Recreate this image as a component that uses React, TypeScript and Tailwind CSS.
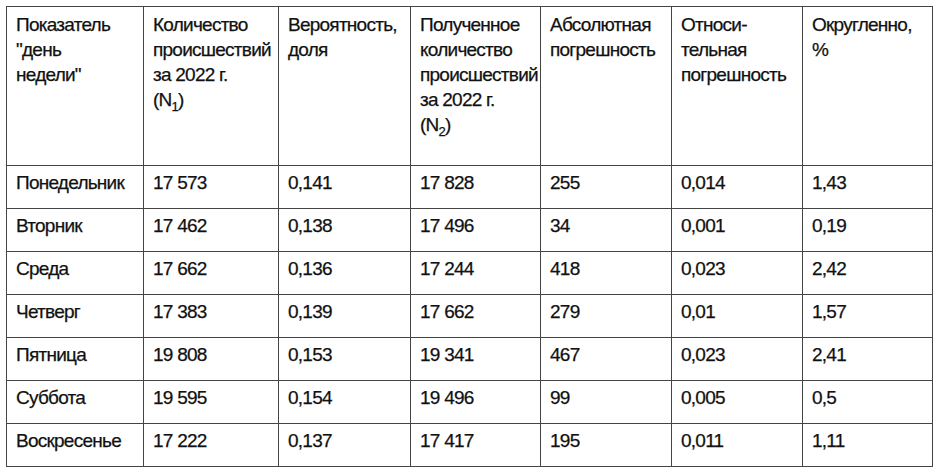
import React from "react";

const rows: string[][] = [
  ["Понедельник", "17 573", "0,141", "17 828", "255", "0,014", "1,43"],
  ["Вторник", "17 462", "0,138", "17 496", "34", "0,001", "0,19"],
  ["Среда", "17 662", "0,136", "17 244", "418", "0,023", "2,42"],
  ["Четверг", "17 383", "0,139", "17 662", "279", "0,01", "1,57"],
  ["Пятница", "19 808", "0,153", "19 341", "467", "0,023", "2,41"],
  ["Суббота", "19 595", "0,154", "19 496", "99", "0,005", "0,5"],
  ["Воскресенье", "17 222", "0,137", "17 417", "195", "0,011", "1,11"],
];

const Sub = ({ n }: { n: string }) => (
  <span className="text-[13px] relative top-[5px] leading-none">{n}</span>
);

const headers: React.ReactNode[] = [
  <>Показатель<br />"день<br />недели"</>,
  <>Количество<br />происшествий<br />за 2022 г.<br />(N<Sub n="1" />)</>,
  <>Вероятность,<br />доля</>,
  <>Полученное<br />количество<br />происшествий<br />за 2022 г.<br />(N<Sub n="2" />)</>,
  <>Абсолютная<br />погрешность</>,
  <>Относи-<br />тельная<br />погрешность</>,
  <>Округленно,<br />%</>,
];

export default function App() {
  return (
    <div className="w-[941px] h-[475px] bg-white pt-[6px] pl-[6px]">
      <div
        className="grid grid-cols-[137px_135px_132px_130px_131px_131px_130px] grid-rows-[159px_repeat(7,43px)] border-l border-t border-[#444] w-[927px] text-[19px] leading-[25px] tracking-[-0.75px] text-[#111] [-webkit-text-stroke:0.25px_#111]"
        style={{ fontFamily: '"Liberation Sans", Arial, sans-serif' }}
      >
        {headers.map((h, i) => (
          <div key={"h" + i} className="border-r border-b border-[#444] pl-[9px] pt-[5px] whitespace-nowrap">
            {h}
          </div>
        ))}
        {rows.map((r, ri) =>
          r.map((c, ci) => (
            <div key={ri + "-" + ci} className="border-r border-b border-[#444] pl-[9px] pt-[4px] whitespace-nowrap">
              {c}
            </div>
          ))
        )}
      </div>
    </div>
  );
}
